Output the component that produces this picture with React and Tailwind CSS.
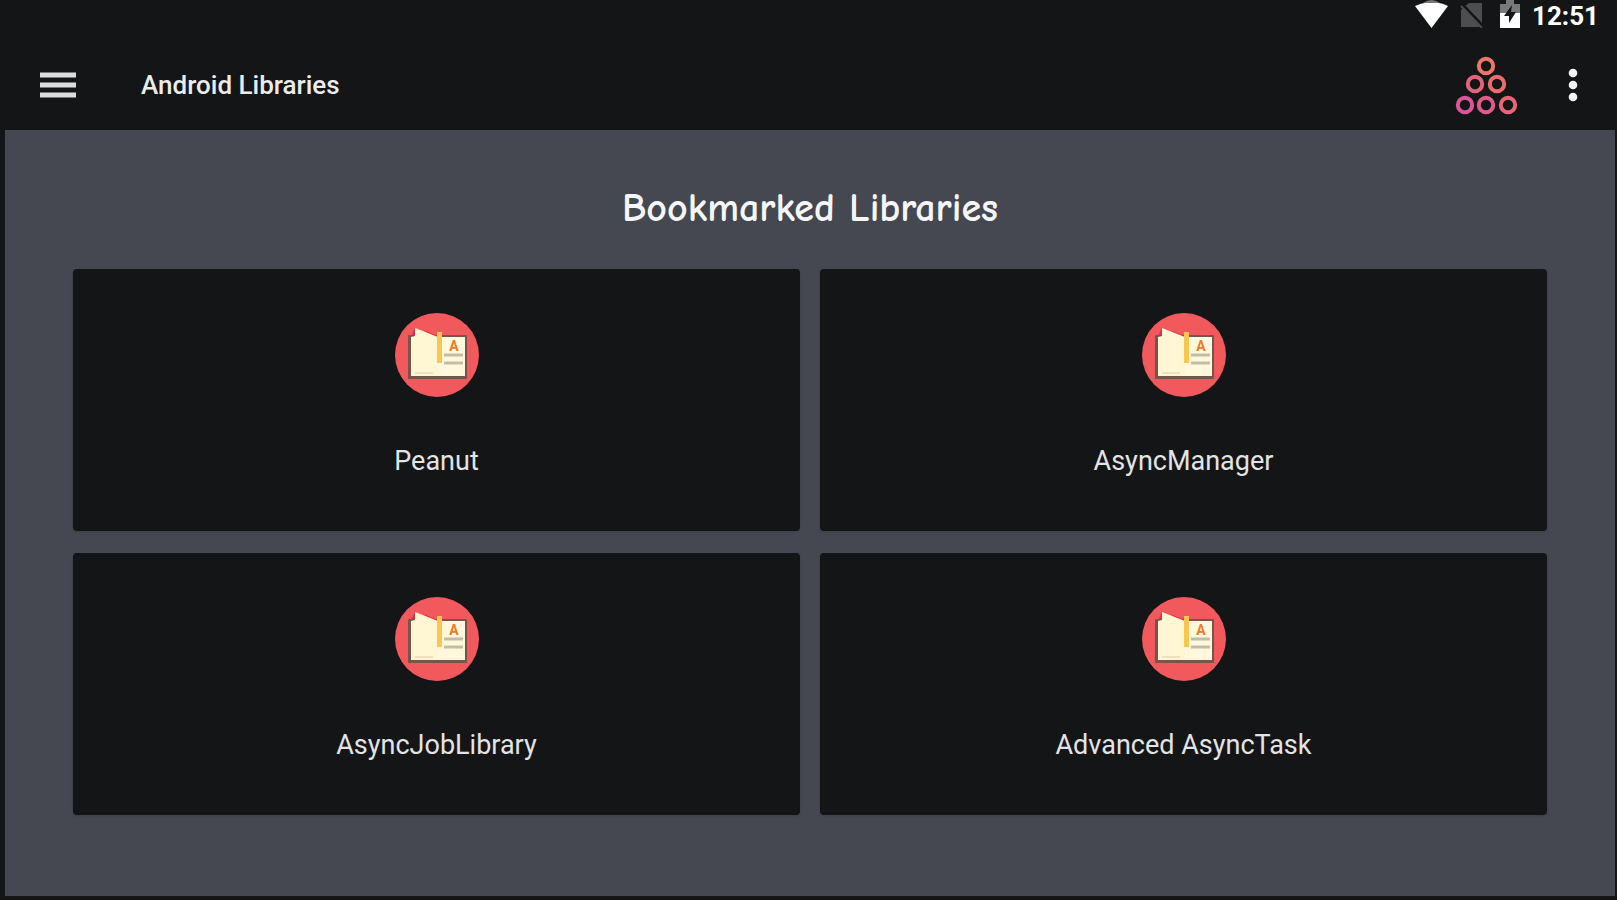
import React from "react";

const libraries = ["Peanut", "AsyncManager", "AsyncJobLibrary", "Advanced AsyncTask"];

const circles = [
    { x: 31, y: 10, color: "#ee7668" },
    { x: 20, y: 28, color: "#e2647c" },
    { x: 42, y: 28, color: "#ea6d6e" },
    { x: 10, y: 49, color: "#dc5596" },
    { x: 31, y: 49, color: "#e05b88" },
    { x: 53, y: 49, color: "#e86577" },
];

const StatusBar = () => {
    return (
        <div className="flex h-10 items-start justify-end pr-4 text-white">
            <svg className="mr-3 h-7 w-[33px]" viewBox="0 0 33 28" aria-hidden="true">
                <path d="M8 3Q16.500 -3 25 3Z" fill="#77787a" />
                <path d="M0 6Q7 3 10 3H23Q27 3 33 6L16.500 28Z" fill="#fff" />
            </svg>
            <svg className="mr-4 h-7 w-6" viewBox="0 0 24 28" aria-hidden="true">
                <path d="M9 3H22V23L5 6ZM1 9L18 27H1Z" fill="#4c4e50" />
                <path d="M3 8L20 25V27H2V9Z" fill="#4c4e50" />
                <path d="M1 4L23 27" stroke="#131517" strokeWidth="4" />
                <path d="M1 6L22 28" stroke="#4c4e50" strokeWidth="2" />
            </svg>
            <svg className="mr-3 h-7 w-5" viewBox="0 0 20 28" aria-hidden="true">
                <path d="M6 0H14V4H20V13H0V4H6Z" fill="#77797b" />
                <path d="M0 13H20V28H0Z" fill="#fff" />
                <path d="M12 5L4 16H9V23L16 12H11Z" fill="#131517" />
            </svg>
            <time className="text-[26px] leading-8 font-bold">12:51</time>
        </div>
    );
};

const Toolbar = () => {
    return (
        <div className="flex h-[90px] items-center pr-8 pl-[35px]">
            <button type="button" aria-label="Open menu" className="cursor-pointer">
                <svg className="h-[26px] w-9" viewBox="0 0 36 26">
                    <path d="M0 3H36M0 13H36M0 23H36" stroke="#dcdcdc" strokeWidth="5" />
                </svg>
            </button>
            <h1 className="ml-[65px] flex-1 text-[26px] font-medium text-[#ececec]">Android Libraries</h1>
            <button type="button" aria-label="All libraries" className="mr-[45px] cursor-pointer">
                <svg className="h-[59px] w-[63px]" viewBox="0 0 63 59">
                    {circles.map((c) => (
                        <circle key={`${c.x}-${c.y}`} cx={c.x} cy={c.y} r="7.200" fill="none" stroke={c.color} strokeWidth="4" />
                    ))}
                </svg>
            </button>
            <button type="button" aria-label="More options" className="cursor-pointer">
                <svg className="h-9 w-5" viewBox="0 0 20 36" fill="#f4f4f4">
                    <circle cx="10" cy="6" r="4.300" />
                    <circle cx="10" cy="18" r="4.300" />
                    <circle cx="10" cy="30" r="4.300" />
                </svg>
            </button>
        </div>
    );
};

const BookIcon = () => {
    return (
        <svg className="size-[84px]" viewBox="0 0 84 84" aria-hidden="true">
            <circle cx="42" cy="42" r="42" fill="#f1595d" />
            <path d="M16 23L20 15L24 23ZM28 17L43 23H36Z" fill="#df2f4b" />
            <rect x="13" y="22" width="59" height="44" rx="1" fill="#75554c" />
            <path d="M16 24H70V63H16Z" fill="#fff8dc" />
            <path d="M16 24L20 23V15L43 24V63H16Z" fill="#fff6d4" />
            <path d="M20 60H38" stroke="#f1dfbd" strokeWidth="2" />
            <path d="M49 42H68M49 50H68" stroke="#c3bda6" strokeWidth="3" />
            <rect x="42" y="19" width="5" height="31" fill="#f9c74f" />
            <text x="59" y="38" textAnchor="middle" fontSize="14" fontWeight="700" fill="#f27a27">A</text>
        </svg>
    );
};

const LibraryCard = ({ name }) => {
    return (
        <a
            href="#"
            className="flex flex-col items-center rounded-sm bg-[#131517] pt-11 pb-[54px] shadow-sm"
        >
            <BookIcon />
            <span className="mt-12 text-[27px] leading-8 text-[#e4e4e4]">{name}</span>
        </a>
    );
};

const App = () => {
    return (
        <div className="flex min-h-screen flex-col bg-[#131517] pr-0.5 pb-1 pl-[5px] font-[Roboto,sans-serif]">
            <header className="bg-[#131517]">
                <StatusBar />
                <Toolbar />
            </header>
            <main className="flex-1 bg-[#454751] px-[68px] pt-12 pb-20">
                <h2 className="mb-[31px] text-center font-['Comic_Neue','Comic_Sans_MS',Lato,sans-serif] text-[40px] leading-[60px] font-bold text-[#f5f6f8]">
                    Bookmarked Libraries
                </h2>
                <div className="grid grid-cols-2 gap-x-5 gap-y-[22px]">
                    {libraries.map((name) => (
                        <LibraryCard key={name} name={name} />
                    ))}
                </div>
            </main>
        </div>
    );
};

export default App;
